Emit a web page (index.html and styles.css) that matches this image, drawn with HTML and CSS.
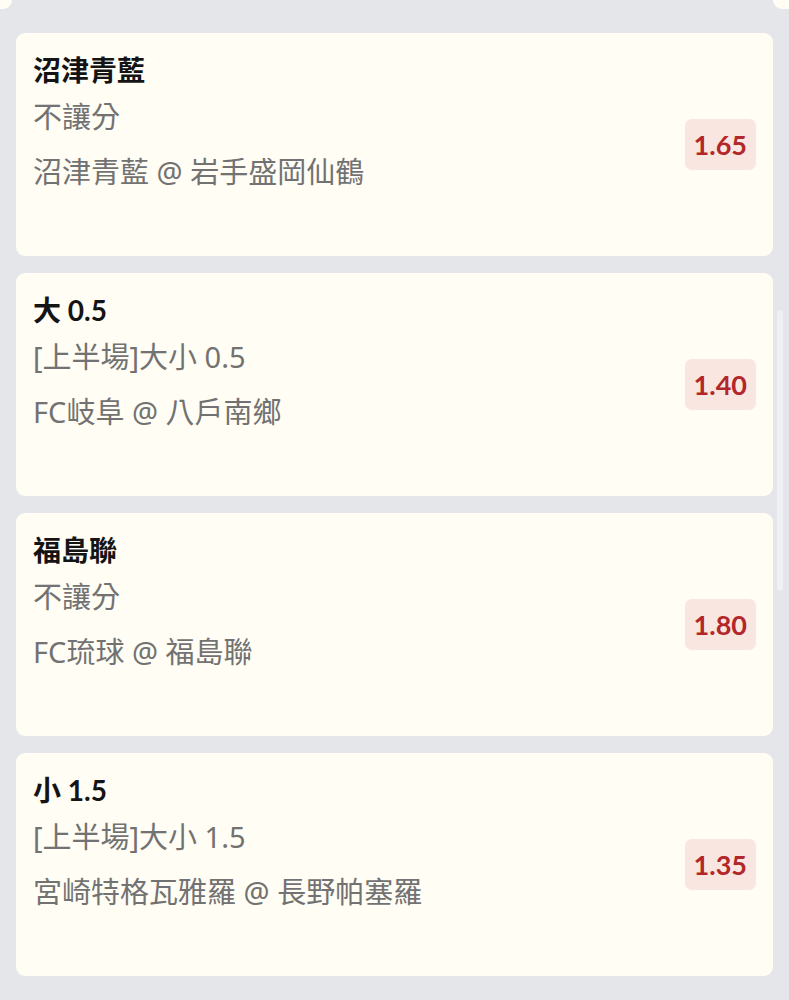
FILE: index.html
```html
<!DOCTYPE html>
<html lang="zh-Hant">
<head>
    <meta charset="UTF-8">
    <meta name="viewport" content="width=device-width, initial-scale=1.0">
    <title>投注單</title>
    <link rel="stylesheet" href="styles.css">
</head>
<body>
    <div class="top-strip">
        <div class="stub stub-left"></div>
        <div class="stub stub-right"></div>
    </div>

    <section class="list">
        <article class="card">
            <div class="info">
                <p class="pick">沼津青藍</p>
                <p class="market">不讓分</p>
                <p class="match">沼津青藍 @ 岩手盛岡仙鶴</p>
            </div>
            <span class="odds">1.65</span>
        </article>
        <article class="card">
            <div class="info">
                <p class="pick">大 0.5</p>
                <p class="market">[上半場]大小 0.5</p>
                <p class="match">FC岐阜 @ 八戶南鄉</p>
            </div>
            <span class="odds">1.40</span>
        </article>
        <article class="card">
            <div class="info">
                <p class="pick">福島聯</p>
                <p class="market">不讓分</p>
                <p class="match">FC琉球 @ 福島聯</p>
            </div>
            <span class="odds">1.80</span>
        </article>
        <article class="card">
            <div class="info">
                <p class="pick">小 1.5</p>
                <p class="market">[上半場]大小 1.5</p>
                <p class="match">宮崎特格瓦雅羅 @ 長野帕塞羅</p>
            </div>
            <span class="odds">1.35</span>
        </article>
    </section>

    <div class="scroll-thumb"></div>
</body>
</html>
```

FILE: styles.css
```css
* {
    box-sizing: border-box;
}

body {
    margin: 0;
    background-color: #e5e6ea;
    font-family: 'Noto Sans', 'Noto Sans CJK TC', sans-serif;
    overflow: hidden;
}

.top-strip {
    display: flex;
    justify-content: space-between;
    height: 9px;
}

.stub {
    background-color: #fffdf4;
}

.stub-left {
    width: 12px;
    border-bottom-right-radius: 10px;
}

.stub-right {
    width: 16px;
    border-bottom-left-radius: 10px;
}

.list {
    display: flex;
    flex-direction: column;
    gap: 17px;
    padding: 24px 16px 0;
}

.card {
    display: flex;
    align-items: center;
    justify-content: space-between;
    height: 223px;
    padding: 0 17px;
    background-color: #fffdf4;
    border-radius: 9px;
}

.info {
    align-self: flex-start;
    padding-top: 18px;
}

.info p {
    margin: 0;
    font-size: 29px;
    line-height: 38px;
}

.info .pick {
    font-family: 'Lato', 'Noto Sans CJK TC', sans-serif;
    font-size: 28px;
    font-weight: 700;
    color: #141414;
}

.market {
    margin-top: 9px !important;
    color: #727272;
}

.match {
    margin-top: 17px !important;
    color: #727272;
}

.odds {
    padding: 9px 9px;
    font-family: 'Lato', sans-serif;
    font-weight: 700;
    font-size: 27px;
    line-height: 33px;
    color: #b3272a;
    background-color: #f9e6e0;
    border-radius: 7px;
}

.scroll-thumb {
    position: absolute;
    left: 777px;
    top: 310px;
    width: 6px;
    height: 281px;
    background-color: #eff0f4;
    border-radius: 3px;
}
```
